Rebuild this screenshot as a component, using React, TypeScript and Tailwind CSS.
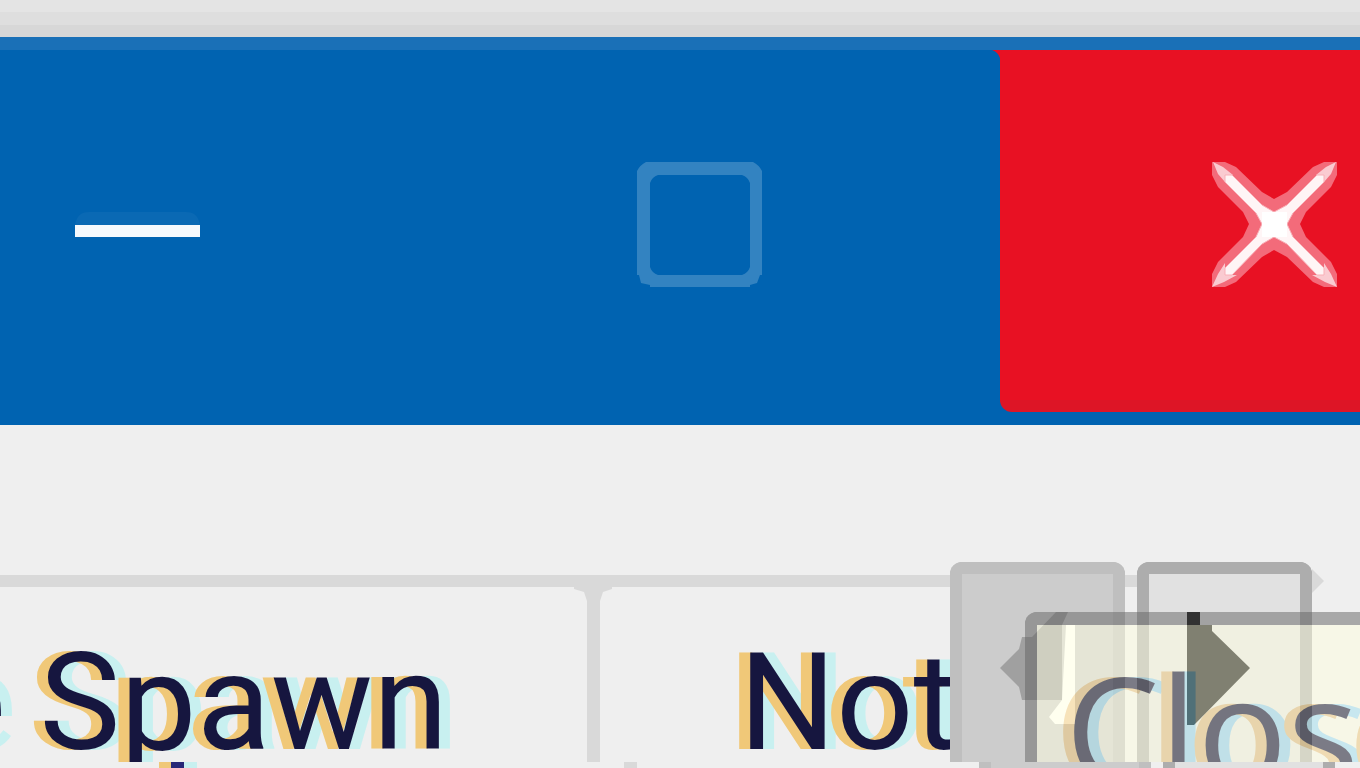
import React from 'react';

const MinimizeIcon = () => (
    <svg width="125" height="125" viewBox="0 0 125 125" aria-hidden="true">
        <path d="M0 63Q2 50 14 50H111Q123 50 125 63Z" fill="#0a69b4" />
        <rect y="63" width="125" height="12" fill="#f5f9fd" />
    </svg>
);

const MaximizeIcon = () => (
    <svg width="125" height="125" viewBox="0 0 125 125" aria-hidden="true">
        <path
            fillRule="evenodd"
            fill="#3383c1"
            d="M9 0H116Q122 3 125 9V113H123L120 121L113 123V125H13V123L4 121L2 113H0V9Q3 3 9 0ZM21 13Q15 15 13 21V105Q15 111 21 113H105Q111 111 113 105V21Q111 15 105 13Z"
        />
    </svg>
);

const CloseIcon = () => (
    <svg width="125" height="125" viewBox="0 0 125 125" aria-hidden="true">
        <path
            fill="#f36b7a"
            d="M0 0H13L24 5L50 30L62 37L75 30L101 5L112 0H125V13L119 25L94 50L88 62L94 75L119 100L125 112V125H112L101 120L75 95L62 88L50 95L24 120L13 125H0V112L6 100L31 75L37 62L31 50L6 25L0 13Z"
        />
        <path
            fill="#facbd1"
            d="M1 0L11 5L21 13L13 20L6 12ZM124 0L114 5L104 13L112 20L119 12ZM0 125L6 112L13 101V113H25L12 120ZM125 125L119 112L112 101V113H100L113 120Z"
        />
        <path
            fill="#fff5f6"
            stroke="#f9b0b8"
            strokeWidth="1"
            d="M13 13H20L50 43L62 50L75 43L105 13H112V20L81 51L75 62L81 75L112 106V113H105L75 82L62 75L50 82L20 113H13V106L44 75L50 62L44 51L13 20Z"
        />
        <rect x="50" y="50" width="25" height="25" fill="#fff" />
    </svg>
);

const TitleBar = () => (
    <header>
        <div className="h-3 bg-[#e4e4e4]" />
        <div className="h-[13px] bg-[#dedede]" />
        <div className="h-3 bg-[#d7d7d7]" />
        <div className="h-[13px] bg-[#1a70b7]" />
        <div className="flex h-[375px] bg-[#0063b1]">
            <button type="button" aria-label="Minimize" className="flex w-[437px] shrink-0 items-start pt-28 pl-[75px]">
                <MinimizeIcon />
            </button>
            <button type="button" aria-label="Maximize" className="flex grow items-start pt-28 pl-[200px]">
                <MaximizeIcon />
            </button>
            <button
                type="button"
                aria-label="Close"
                className="relative mb-[13px] flex w-[360px] shrink-0 items-start rounded-bl-xl border-b-12 border-[#dd1526] bg-[#e81123] pt-28 pl-[212px]"
            >
                <svg width="8" height="8" viewBox="0 0 8 8" className="absolute top-0 -left-2" aria-hidden="true">
                    <path d="M0 0H8V8Q6 2 0 0Z" fill="#e81123" />
                </svg>
                <CloseIcon />
            </button>
        </div>
    </header>
);

const tabText = 'block whitespace-nowrap text-[136px] leading-[140px] text-[#16163f] [text-shadow:-11px_0_#f0c878,11px_0_#c8f0f0]';

const TabBar = () => (
    <nav className="relative flex h-[200px] overflow-hidden font-[Roboto,sans-serif]">
        <button type="button" className="mt-[13px] flex w-[600px] shrink-0 justify-end overflow-hidden border-t-12 border-r-13 border-[#d9d9d9] pt-[46px] pr-[139px]">
            <span className={tabText}>e Spawn</span>
        </button>
        <svg width="38" height="14" viewBox="0 0 38 14" className="absolute top-[25px] left-[574px]" aria-hidden="true">
            <path d="M0 0H38V2L29 5L26 14H13L10 5L0 2Z" fill="#d9d9d9" />
        </svg>
        <button type="button" className="mt-[13px] flex min-w-0 grow overflow-hidden border-t-12 border-[#d9d9d9] pt-[46px] pl-[139px]">
            <span className={tabText}>Not</span>
        </button>
        <div className="relative flex w-[410px] shrink-0">
            <button
                type="button"
                aria-label="Scroll left"
                className="flex w-[175px] items-start rounded-t-xl border-12 border-b-0 border-[#bfbfbf] bg-[#cccccc] pt-[38px] pl-[38px]"
            >
                <svg width="76" height="126" viewBox="0 0 76 126" className="shrink-0" aria-hidden="true">
                    <path d="M66 13H75V112H55L49 105L62 88Z" fill="#fff" />
                    <path d="M56 0H68L62 13V88H22L19 75L0 56L19 37L22 25H32Z" fill="#a0a0a0" />
                </svg>
            </button>
            <div className="mt-[13px] h-3 w-3 bg-[#d9d9d9]" />
            <button
                type="button"
                aria-label="Scroll right"
                className="flex w-[175px] items-start rounded-t-xl border-12 border-b-0 border-[#adadad] bg-[#e1e1e1] pt-[38px] pl-[38px]"
            >
                <svg width="64" height="126" viewBox="0 0 64 126" className="shrink-0" aria-hidden="true">
                    <path d="M0 0H13V13H25V19L63 56L7 113H0Z" fill="#000" />
                </svg>
            </button>
            <svg width="12" height="24" viewBox="0 0 12 24" className="mt-[7px]" aria-hidden="true">
                <path d="M0 0L12 12L0 24Z" fill="#d9d9d9" />
            </svg>
            <div
                role="tooltip"
                className="absolute top-[50px] right-0 bottom-0 left-[75px] overflow-hidden rounded-tl-xl border-t-13 border-l-12 border-[#646464] bg-[#ffffe1] pt-7 pl-7 opacity-50"
            >
                <span className="block whitespace-nowrap font-['Open_Sans',sans-serif] text-[150px] leading-[150px] text-[#0a0a20] [text-shadow:-11px_0_#f0c878,11px_0_#a0e0f0]">
                    Close
                </span>
            </div>
        </div>
    </nav>
);

// Top edge of the next line of the window
const TabPage = () => (
    <main className="flex h-1.5 overflow-hidden">
        <div className="flex w-[600px] shrink-0 pl-[159px]">
            <div className="w-3 bg-[#f0c878]" />
            <div className="w-[13px] bg-[#272777]" />
            <div className="w-[13px] bg-[#c8f0f0]" />
        </div>
        <div className="grow pl-6">
            <div className="h-full w-[13px] bg-[#d9d9d9]" />
        </div>
        <div className="flex w-[381px] shrink-0 gap-3">
            <div className="w-[172px] border-x-12 border-[#bfbfbf] bg-[#cccccc]" />
            <div className="w-[172px] border-x-12 border-[#adadad] bg-[#e1e1e1]" />
        </div>
    </main>
);

const App = () => {
    return (
        <div className="flex h-screen flex-col overflow-hidden bg-[#efefef]">
            <TitleBar />
            <div className="h-[137px] shrink-0" />
            <div className="shrink-0">
                <TabBar />
                <TabPage />
            </div>
        </div>
    );
};

export default App;
